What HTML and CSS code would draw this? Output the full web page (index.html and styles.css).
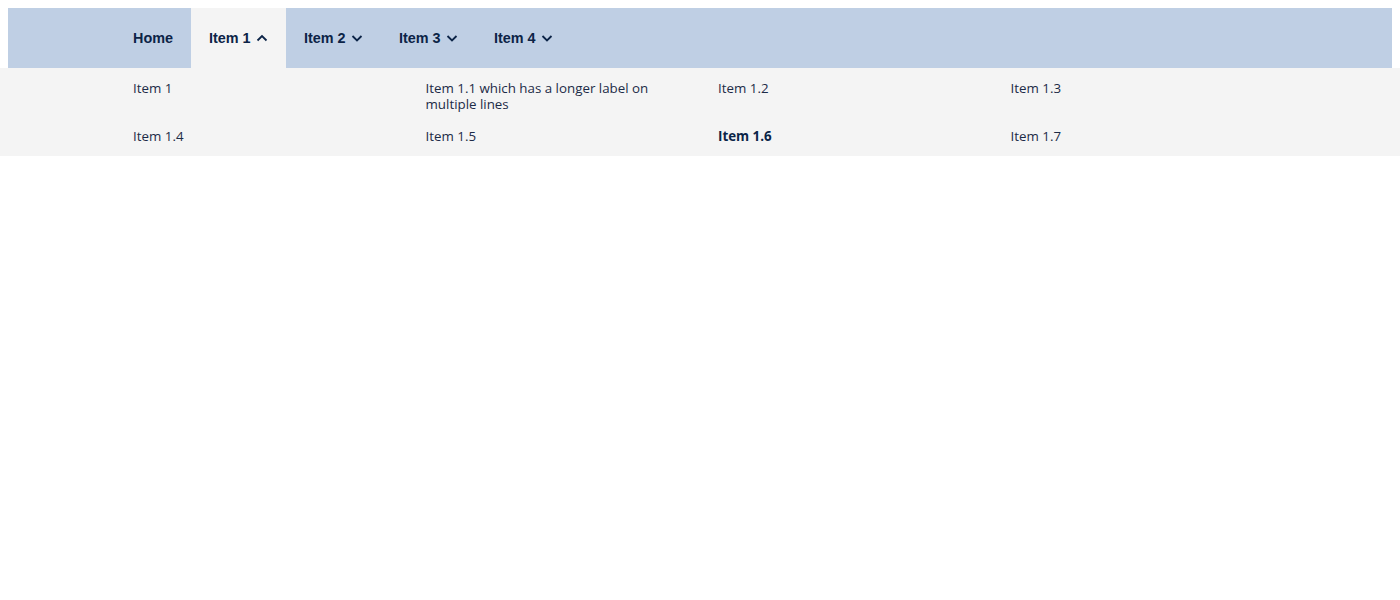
FILE: index.html
```html
<!DOCTYPE html>
<html lang="en">
<head>
<meta charset="utf-8">
<title>Mega menu</title>
<link rel="stylesheet" href="styles.css">
</head>
<body>
<nav class="nav">
  <ul class="nav-list">
    <li class="nav-item"><a class="nav-link" href="#">Home</a></li>
    <li class="nav-item nav-item--open">
      <button class="nav-link">Item 1
        <svg class="chev" viewBox="0 0 12 12" width="12" height="12"><path d="M1.5 8.5 L6 4 L10.5 8.5" fill="none" stroke="currentColor" stroke-width="1.8"/></svg>
      </button>
      <div class="panel">
        <ul class="panel-grid">
          <li class="panel-item">Item 1</li>
          <li class="panel-item">Item 1.1 which has a longer label on multiple lines</li>
          <li class="panel-item">Item 1.2</li>
          <li class="panel-item">Item 1.3</li>
          <li class="panel-item">Item 1.4</li>
          <li class="panel-item">Item 1.5</li>
          <li class="panel-item panel-item--active">Item 1.6</li>
          <li class="panel-item">Item 1.7</li>
        </ul>
      </div>
    </li>
    <li class="nav-item">
      <button class="nav-link">Item 2
        <svg class="chev" viewBox="0 0 12 12" width="12" height="12"><path d="M1.5 4 L6 8.5 L10.5 4" fill="none" stroke="currentColor" stroke-width="1.8"/></svg>
      </button>
    </li>
    <li class="nav-item">
      <button class="nav-link">Item 3
        <svg class="chev" viewBox="0 0 12 12" width="12" height="12"><path d="M1.5 4 L6 8.5 L10.5 4" fill="none" stroke="currentColor" stroke-width="1.8"/></svg>
      </button>
    </li>
    <li class="nav-item">
      <button class="nav-link">Item 4
        <svg class="chev" viewBox="0 0 12 12" width="12" height="12"><path d="M1.5 4 L6 8.5 L10.5 4" fill="none" stroke="currentColor" stroke-width="1.8"/></svg>
      </button>
    </li>
  </ul>
</nav>
</body>
</html>
```
FILE: styles.css
```css
body {
  margin: 8px;
  background: #ffffff;
  font-family: "Liberation Sans", Arial, sans-serif;
}

.nav {
  background: #bfcfe4;
  height: 60px;
}

.nav-list {
  list-style: none;
  margin: 0 auto;
  padding: 0;
  max-width: 1170px;
  height: 100%;
  display: flex;
}

.nav-item {
  height: 100%;
}

.nav-link {
  height: 100%;
  display: flex;
  align-items: center;
  gap: 5.4px;
  padding: 0 18px;
  border: 0;
  background: transparent;
  color: #0c2447;
  font-family: "Liberation Sans", Arial, sans-serif;
  font-size: 14.4px;
  font-weight: bold;
  text-decoration: none;
  cursor: pointer;
}

.nav-item--open .nav-link {
  background: #f4f4f4;
}

.chev {
  display: block;
}

.panel {
  position: absolute;
  top: 68px;
  left: 0;
  right: 0;
  background: #f4f4f4;
  padding: 12px 0;
}

.panel-grid {
  list-style: none;
  margin: 0 auto;
  padding: 0;
  max-width: 1170px;
  display: grid;
  grid-template-columns: repeat(4, 1fr);
  row-gap: 16px;
}

.panel-item {
  padding: 0 18px;
  font-family: "Open Sans", "Noto Sans", sans-serif;
  font-size: 13.33px;
  line-height: 16px;
  color: #1c2b47;
}

.panel-item--active {
  font-weight: bold;
  color: #0c2447;
}
```
